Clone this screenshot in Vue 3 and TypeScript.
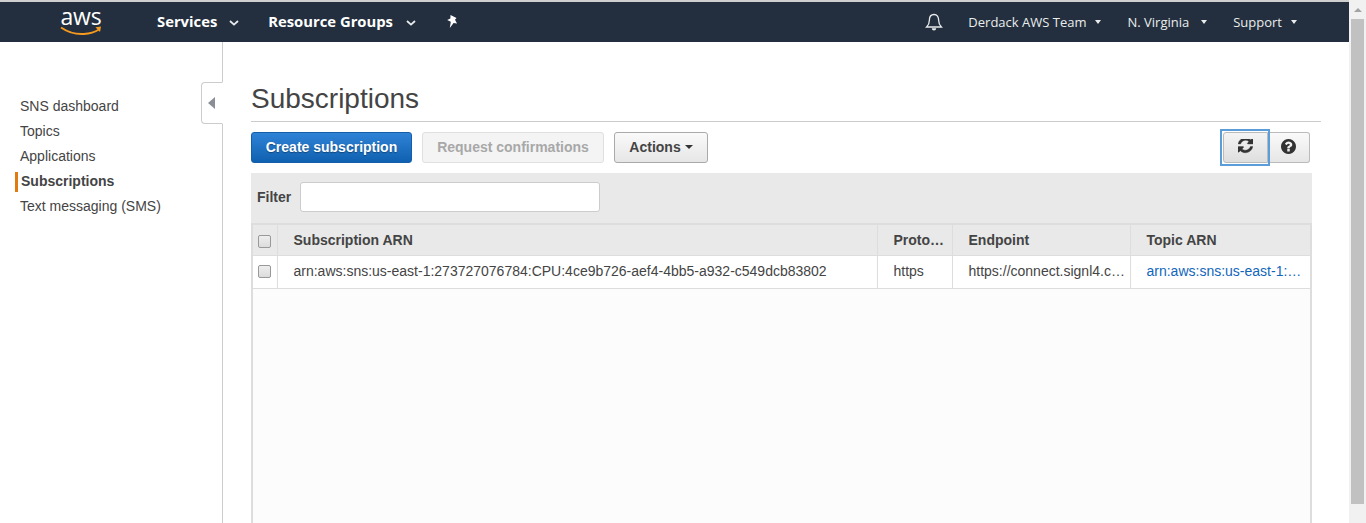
<script setup lang="ts">
const nav = [
  { label: 'SNS dashboard', active: false },
  { label: 'Topics', active: false },
  { label: 'Applications', active: false },
  { label: 'Subscriptions', active: true },
  { label: 'Text messaging (SMS)', active: false },
]
const refreshPath = 'M1511 928q0 5-1 7-64 268-268 434.5t-478 166.5q-146 0-282.5-55t-243.5-157l-129 129q-19 19-45 19t-45-19-19-45v-448q0-26 19-45t45-19h448q26 0 45 19t19 45-19 45l-137 137q71 66 161 102t187 36q134 0 250-65t186-179q11-17 53-117 8-23 30-23h192q13 0 22.5 9.5t9.5 22.5zm25-800v448q0 26-19 45t-45 19h-448q-26 0-45-19t-19-45 19-45l138-138q-148-137-349-137-134 0-250 65t-186 179q-11 17-53 117-8 23-30 23h-199q-13 0-22.5-9.5t-9.5-22.5v-7q65-268 270-434.5t480-166.5q146 0 284 55.5t245 156.5l130-129q19-19 45-19t45 19 19 45z'
const helpPath = 'M896 1376v-192q0-14-9-23t-23-9h-192q-14 0-23 9t-9 23v192q0 14 9 23t23 9h192q14 0 23-9t9-23zm256-672q0-88-55.5-163t-138.5-116-170-41q-243 0-371 213-15 24 8 42l132 100q7 6 19 6 16 0 25-12 53-68 86-92 34-24 86-24 48 0 85.5 26t37.5 59q0 38-20 61t-68 45q-63 28-115.5 86.5t-52.5 125.5v36q0 14 9 23t23 9h192q14 0 23-9t9-23q0-19 21.5-49.5t54.5-49.5q32-18 49-28.5t46-35 44.5-48 28-60.5 12.5-81zm384 192q0 209-103 385.5t-279.5 279.5-385.5 103-385.5-103-279.5-279.5-103-385.5 103-385.5 279.5-279.5 385.5-103 385.5 103 279.5 279.5 103 385.5z'
</script>

<template>
  <div class="page">
    <div class="main">
      <header class="topbar">
        <div class="logo">
          <span class="logo-text">aws</span>
          <svg class="smile" width="42" height="11" viewBox="0 0 42 11">
            <path d="M1 2.5C9 8 17 9.5 24 9 C30 8.6 35 7 39 4.5" fill="none" stroke="#f49a1f" stroke-width="2" />
            <path d="M35.5 2.2L41 1.5L40 7Z" fill="#f49a1f" />
          </svg>
        </div>
        <div class="menu strong first">
          <span>Services</span>
          <svg class="chev" width="10" height="6" viewBox="0 0 10 6"><path d="M1 1l4 3.6L9 1" fill="none" stroke="#e8eaec" stroke-width="1.8" /></svg>
        </div>
        <div class="menu strong second">
          <span>Resource Groups</span>
          <svg class="chev" width="10" height="6" viewBox="0 0 10 6"><path d="M1 1l4 3.6L9 1" fill="none" stroke="#e8eaec" stroke-width="1.8" /></svg>
        </div>
        <svg class="pin" width="13" height="15" viewBox="0 0 13 14">
          <path d="M4.5 0.5L10.5 3.6L9 5.2L11 9L7.6 8.4L3.8 13.5L4.8 7.2L1.2 5.6L4.4 4Z" fill="#fff" />
        </svg>
        <div class="spacer"></div>
        <svg class="bell" width="18" height="18" viewBox="0 0 18 18">
          <path d="M9 1.5C5.8 1.5 4.4 4 4.4 7C4.4 10.5 3.4 12.2 1.6 14H16.4C14.6 12.2 13.6 10.5 13.6 7C13.6 4 12.2 1.5 9 1.5Z" fill="none" stroke="#e8eaec" stroke-width="1.3" />
          <path d="M6.8 15.2a2.2 2.2 0 0 0 4.4 0Z" fill="#e8eaec" />
        </svg>
        <div class="menu light team">
          <span>Derdack AWS Team</span><i class="caret-w"></i>
        </div>
        <div class="menu light region">
          <span>N. Virginia</span><i class="caret-w"></i>
        </div>
        <div class="menu light support">
          <span>Support</span><i class="caret-w"></i>
        </div>
      </header>

      <div class="body">
        <aside class="sidebar">
          <ul class="nav">
            <li v-for="item in nav" :key="item.label" :class="{ active: item.active }">{{ item.label }}</li>
          </ul>
          <div class="collapse"><i class="tri"></i></div>
        </aside>

        <section class="content">
          <h1 class="title">Subscriptions</h1>
          <div class="toolbar">
            <button class="btn primary create">Create subscription</button>
            <button class="btn disabled request">Request confirmations</button>
            <button class="btn actions">Actions<i class="caret-d"></i></button>
            <div class="spacer"></div>
            <div class="group">
              <button class="btn icon refresh">
                <svg width="15" height="15" viewBox="0 128 1536 1536"><path :d="refreshPath" fill="#333" stroke="#333" stroke-width="40" /></svg>
              </button>
              <button class="btn icon help">
                <svg width="15" height="15" viewBox="0 128 1536 1536"><path :d="helpPath" fill="#333" /></svg>
              </button>
            </div>
          </div>

          <div class="filter">
            <label>Filter</label>
            <div class="input"></div>
          </div>

          <div class="grid">
            <table>
              <colgroup>
                <col class="c1" /><col class="c2" /><col class="c3" /><col class="c4" /><col class="c5" />
              </colgroup>
              <thead>
                <tr>
                  <th><span class="check"></span></th>
                  <th>Subscription ARN</th>
                  <th>Proto…</th>
                  <th>Endpoint</th>
                  <th>Topic ARN</th>
                </tr>
              </thead>
              <tbody>
                <tr>
                  <td class="check-cell"><span class="check"></span></td>
                  <td>arn:aws:sns:us-east-1:273727076784:CPU:4ce9b726-aef4-4bb5-a932-c549dcb83802</td>
                  <td>https</td>
                  <td>https://connect.signl4.c…</td>
                  <td class="link">arn:aws:sns:us-east-1:…</td>
                </tr>
              </tbody>
            </table>
          </div>
        </section>
      </div>
    </div>

    <div class="scrollbar">
      <div class="arrow"><i></i></div>
      <div class="thumb"></div>
    </div>
  </div>
</template>

<style>
html, body { margin: 0; height: 100%; overflow: hidden; background: #fff; }
</style>

<style scoped>
.page {
  display: flex;
  height: 523px;
  overflow: hidden;
  font-family: "Liberation Sans", Arial, sans-serif;
  font-size: 14px;
  color: #444;
  background: #fff;
}
.main { flex: 1; min-width: 0; display: flex; flex-direction: column; }

.topbar {
  height: 40px;
  flex: none;
  display: flex;
  align-items: center;
  background: #232f3e;
  border-top: 2px solid #cfcfcf;
  color: #fff;
  font-family: "Open Sans", sans-serif;
}
.logo {
  width: 42px;
  margin-left: 60px;
  height: 40px;
  display: flex;
  flex-direction: column;
  align-items: center;
}
.logo-text {
  font-family: "Open Sans", sans-serif;
  font-size: 23px;
  font-weight: 400;
  line-height: 18px;
  margin-top: 5px;
  letter-spacing: -0.2px;
  color: #fff;
}
.smile { display: block; margin-top: 0; }
.menu { display: flex; align-items: center; white-space: nowrap; }
.strong { font-size: 14.8px; font-weight: 700; padding-bottom: 2px; }
.light { font-size: 13px; color: #eaeded; }
.first { margin-left: 55px; }
.second { margin-left: 29px; }
.chev { margin-left: 13px; margin-top: 3px; }
.first .chev { margin-left: 12px; }
.pin { margin-left: 30px; margin-bottom: 2px; }
.spacer { flex: 1; }
.team { margin-left: 25px; }
.region { margin-left: 26px; }
.region .caret-w { margin-left: 12px; }
.support { margin-right: 52px; margin-left: 26px; }
.caret-w {
  display: inline-block;
  margin-left: 9px;
  width: 0;
  height: 0;
  border-left: 3.5px solid transparent;
  border-right: 3.5px solid transparent;
  border-top: 4px solid #eaeded;
}

.body { flex: 1; display: flex; min-height: 0; }
.sidebar {
  width: 222px;
  flex: none;
  border-right: 1px solid #ccc;
  position: relative;
  box-sizing: content-box;
}
.nav { list-style: none; margin: 0; padding: 52px 0 0 15px; }
.nav li {
  height: 25px;
  line-height: 24px;
  padding-left: 5px;
  color: #444;
}
.nav li.active {
  font-weight: 700;
  border-left: 3px solid #e07b0f;
  padding-left: 3px;
  height: 20px;
  line-height: 19px;
  margin: 3px 0 2px;
}
.collapse {
  position: absolute;
  right: -1px;
  top: 40px;
  width: 20px;
  height: 40px;
  background: #fff;
  border: 1px solid #ccc;
  border-right-color: #fff;
  border-radius: 4px 0 0 4px;
  display: flex;
  align-items: center;
  justify-content: center;
}
.tri {
  width: 0;
  height: 0;
  border-top: 6px solid transparent;
  border-bottom: 6px solid transparent;
  border-right: 7px solid #8a8f96;
  margin-right: 2px;
}

.content { flex: 1; min-width: 0; padding-left: 28px; display: flex; flex-direction: column; }
.title {
  margin: 39px 28px 0 0;
  height: 40px;
  font-size: 28px;
  line-height: 36px;
  font-weight: 400;
  color: #444;
  border-bottom: 1px solid #ccc;
  box-sizing: content-box;
}
.toolbar {
  display: flex;
  align-items: center;
  margin-top: 10px;
  height: 31px;
  margin-right: 39px;
}
.btn {
  height: 31px;
  box-sizing: border-box;
  border-radius: 3px;
  font-family: "Liberation Sans", Arial, sans-serif;
  font-size: 14px;
  font-weight: 700;
  padding: 0 0 2px;
  display: flex;
  align-items: center;
  justify-content: center;
  border: 1px solid #aaa;
  color: #444;
  background: linear-gradient(#fafafa, #e6e6e6);
}
.primary {
  border-color: #155fa8;
  color: #fff;
  background: linear-gradient(#2f83d6, #0f60b0);
  text-shadow: 0 1px 1px rgba(0, 0, 0, 0.35);
}
.create { width: 161px; }
.disabled {
  border-color: #e0e0e0;
  color: #a8a8a8;
  background: #f4f4f4;
}
.request { width: 182px; margin-left: 10px; }
.actions { width: 94px; margin-left: 10px; }
.caret-d {
  display: inline-block;
  margin-left: 4px;
  width: 0;
  height: 0;
  border-left: 4px solid transparent;
  border-right: 4px solid transparent;
  border-top: 4px solid #333;
}
.group { display: flex; }
.icon svg { display: block; }
.refresh {
  width: 45px;
  border-radius: 3px 0 0 3px;
  border-color: #bbb;
  background: linear-gradient(#f4f4f4, #dedede);
  position: relative;
  z-index: 1;
}
.refresh::after {
  content: "";
  position: absolute;
  inset: -4px -3px -4px -4px;
  border: 2px solid #5b9dd9;
}
.help { width: 42px; border-left: none; border-color: #bbb; border-radius: 0 3px 3px 0; }

.filter {
  margin-top: 10px;
  margin-right: 37px;
  height: 50px;
  box-sizing: border-box;
  background: #e9e9e9;
  display: flex;
  align-items: center;
  padding: 0 0 2px 6px;
  flex: none;
}
.filter label { font-weight: 700; width: 43px; color: #444; }
.input {
  width: 298px;
  height: 28px;
  background: #fff;
  border: 1px solid #ccc;
  border-radius: 3px;
}

.grid {
  flex: 1;
  margin: 0 37px 0 0;
  border: 2px solid #ddd;
  border-bottom: none;
  background: #fcfcfc;
  min-height: 0;
}
table {
  width: 100%;
  table-layout: fixed;
  border-collapse: collapse;
}
.c1 { width: 24px; }
.c2 { width: 600px; }
.c3 { width: 75px; }
.c4 { width: 178px; }
th, td {
  padding: 0 0 0 16px;
  text-align: left;
  white-space: nowrap;
  overflow: hidden;
  border-left: 1px solid #ddd;
  border-bottom: 1px solid #ddd;
  box-sizing: border-box;
}
th:first-child, td:first-child { border-left: none; padding: 0; text-align: center; }
th { height: 30px; padding-top: 1px; background: #e9e9e9; font-weight: 700; color: #444; }
td { height: 33px; background: #fff; color: #444; padding-bottom: 2px; }
td.check-cell { padding-bottom: 3px; }
.link { color: #1166bb; }
.check {
  display: inline-block;
  vertical-align: middle;
  width: 11px;
  height: 11px;
  border: 1px solid #999;
  border-radius: 2px;
  background: linear-gradient(#eee, #dcdcdc);
}

.scrollbar {
  width: 17px;
  flex: none;
  background: #f1f1f1;
  display: flex;
  flex-direction: column;
  align-items: center;
}
.arrow { height: 19px; display: flex; align-items: center; justify-content: center; }
.arrow i {
  width: 0;
  height: 0;
  border-left: 4px solid transparent;
  border-right: 4px solid transparent;
  border-bottom: 4px solid #a3a3a3;
}
.thumb { width: 13px; height: 485px; background: #c1c1c1; }
</style>
